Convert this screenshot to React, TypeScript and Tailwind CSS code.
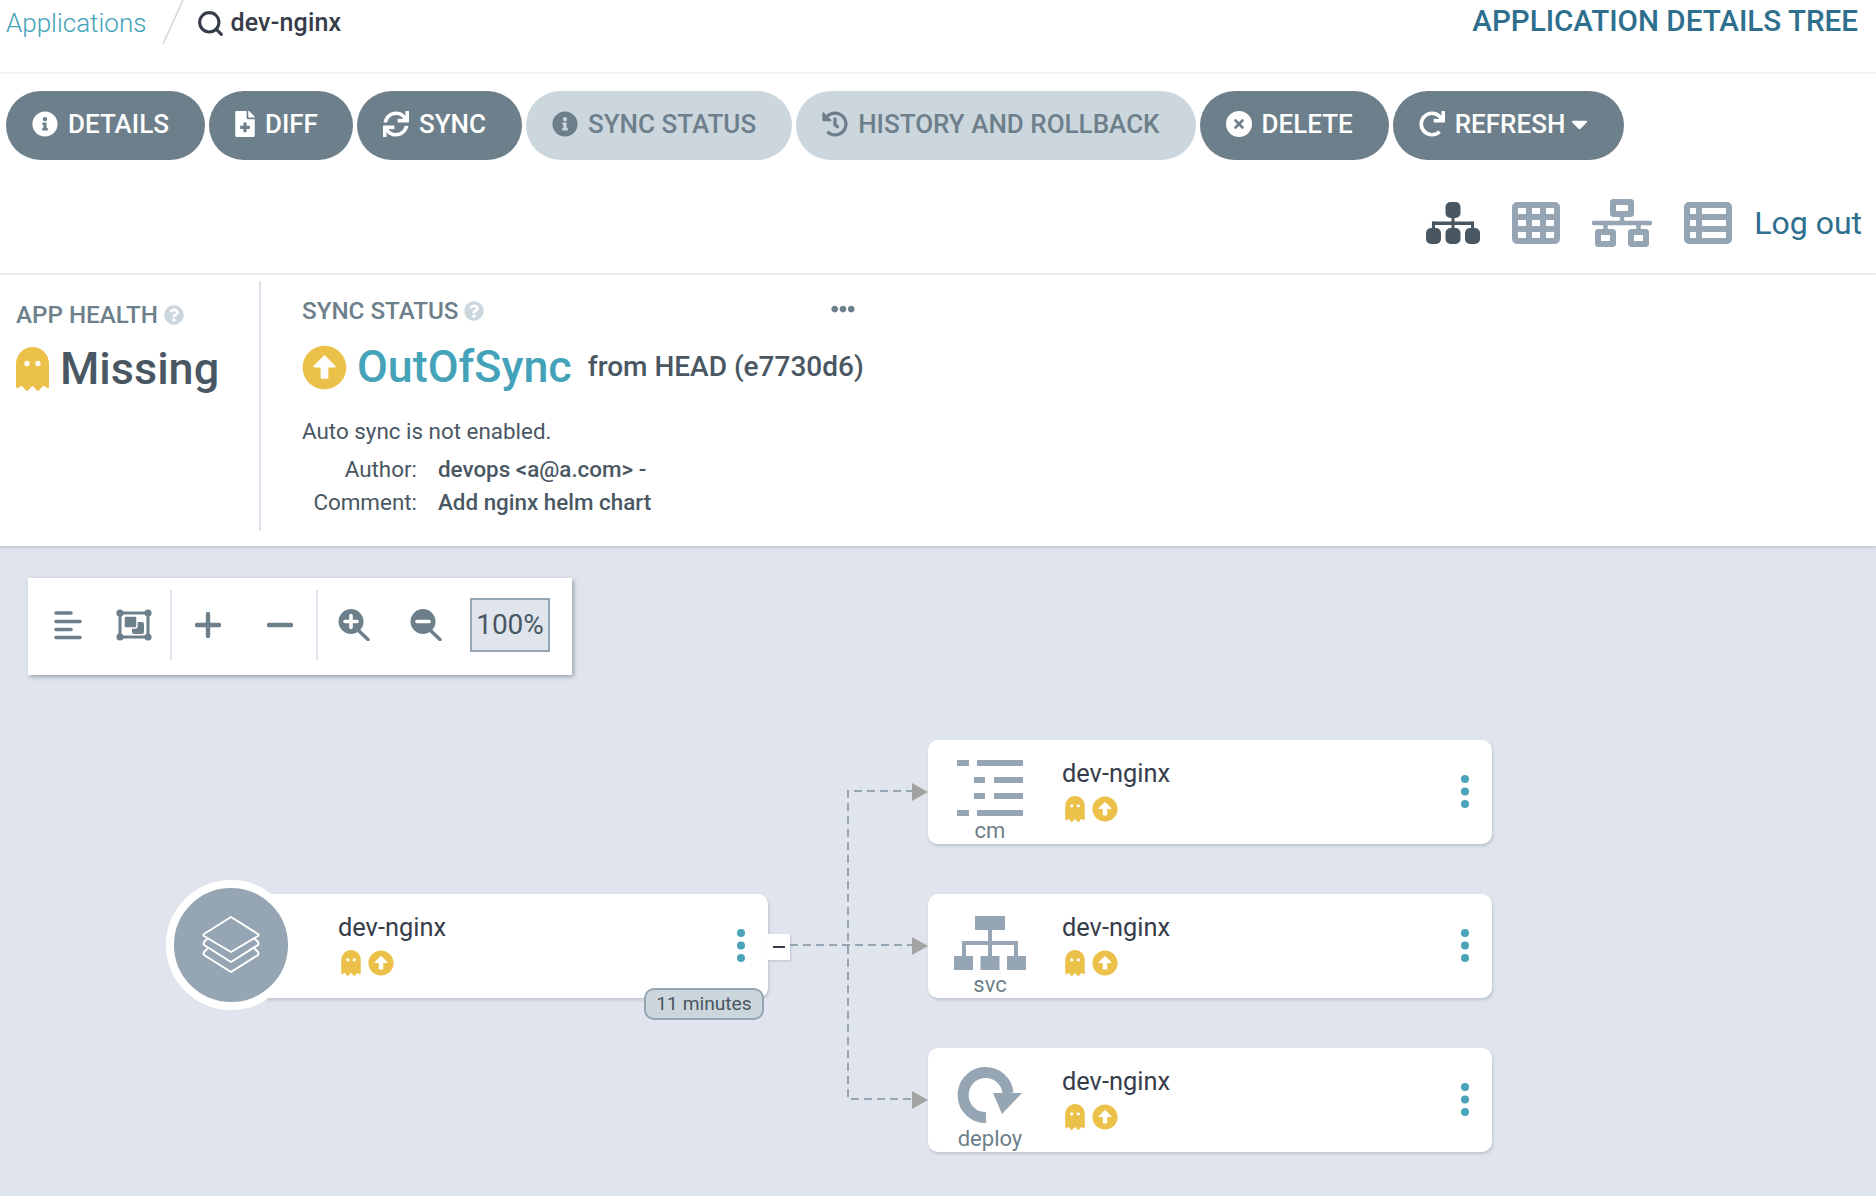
import React from 'react';
import { Search } from 'lucide-react';
import {
    FaInfoCircle, FaFileMedical, FaSync, FaHistory, FaRedo, FaCaretDown,
    FaNetworkWired, FaGhost, FaArrowAltCircleUp, FaQuestionCircle, FaEllipsisH,
} from 'react-icons/fa';

const ActionButton: React.FC<{ label: string; icon: React.ReactNode; disabled?: boolean; caret?: boolean; tight?: boolean }> = ({ label, icon, disabled, caret, tight }) => (
    <button
        className={`flex h-[69px] items-center rounded-[35px] pb-[3px] pl-[26px] text-[26px] font-medium ${tight ? 'pr-[35px]' : 'pr-[36px]'} ${disabled ? 'bg-[#ccd6dd] text-[#6d7f8b]' : 'bg-[#6d7f8b] text-white'}`}
    >
        <span className="mr-[10px] text-[26px]">{icon}</span>
        {label}
        {caret && <FaCaretDown className="ml-[6px] h-[26px] w-[17px]" />}
    </button>
);

const DeleteGlyph = () => (
    <svg width="26" height="26" viewBox="0 0 26 26">
        <circle cx="13" cy="13" r="13" fill="white" />
        <path d="M9.5 9.5 L16.5 16.5 M16.5 9.5 L9.5 16.5" stroke="#6d7f8b" strokeWidth="2.6" strokeLinecap="round" />
    </svg>
);

const TreeGlyph = () => (
    <svg width="54" height="42" viewBox="0 0 54 42" className="fill-[#495763]">
        <rect x="19.5" y="0" width="15" height="16" rx="5" />
        <rect x="25.5" y="14" width="3" height="14" />
        <rect x="6" y="19.5" width="42" height="3.5" rx="1.75" />
        <rect x="6" y="19.5" width="3" height="8" />
        <rect x="45" y="19.5" width="3" height="8" />
        <rect x="0" y="26" width="15" height="16" rx="5" />
        <rect x="19.5" y="26" width="15" height="16" rx="5" />
        <rect x="39" y="26" width="15" height="16" rx="5" />
    </svg>
);

const GridGlyph = () => (
    <svg width="48" height="42" viewBox="0 0 48 42" className="fill-[#95a5b3]">
        <path
            fillRule="evenodd"
            d="M5 0H43A5 5 0 0 1 48 5V37A5 5 0 0 1 43 42H5A5 5 0 0 1 0 37V5A5 5 0 0 1 5 0Z
               M6 6V12H14V6Z M20 6V12H28V6Z M34 6V12H42V6Z
               M6 18V24H14V18Z M20 18V24H28V18Z M34 18V24H42V18Z
               M6 30V36H14V30Z M20 30V36H28V30Z M34 30V36H42V30Z"
        />
    </svg>
);

const ListGlyph = () => (
    <svg width="48" height="42" viewBox="0 0 48 42" className="fill-[#95a5b3]">
        <path
            fillRule="evenodd"
            d="M5 0H43A5 5 0 0 1 48 5V37A5 5 0 0 1 43 42H5A5 5 0 0 1 0 37V5A5 5 0 0 1 5 0Z
               M6 6V12H12V6Z M18 6V12H42V6Z
               M6 18V24H12V18Z M18 18V24H42V18Z
               M6 30V36H12V30Z M18 30V36H42V30Z"
        />
    </svg>
);

const StatusIcons = () => (
    <div className="mt-[6px] flex items-center gap-[7px] pl-[3px] text-[#ecc14a]">
        <FaGhost className="h-[26px] w-[20px]" />
        <FaArrowAltCircleUp size={26} />
    </div>
);

const Kebab = () => (
    <svg width="8" height="33" viewBox="0 0 8 33" className="-mt-[2px] fill-[#4aa3b8]">
        <circle cx="4" cy="4" r="4" />
        <circle cx="4" cy="16.5" r="4" />
        <circle cx="4" cy="29" r="4" />
    </svg>
);

const ConfigMapIcon = () => (
    <svg width="66" height="56" viewBox="0 0 66 56" className="mt-[1px] fill-[#95a5b3]">
        <rect x="0" y="0" width="12" height="6" />
        <rect x="20" y="0" width="46" height="6" />
        <rect x="17" y="17" width="11" height="6" />
        <rect x="37" y="17" width="29" height="6" />
        <rect x="17" y="33" width="11" height="6" />
        <rect x="37" y="33" width="29" height="6" />
        <rect x="0" y="50" width="12" height="6" />
        <rect x="20" y="50" width="46" height="6" />
    </svg>
);

const ServiceIcon = () => (
    <svg width="72" height="54" viewBox="0 0 72 54" className="mt-[2px] fill-[#95a5b3]">
        <rect x="21" y="0" width="30" height="14" />
        <rect x="34" y="14" width="4" height="27" />
        <rect x="8" y="25" width="56" height="4" />
        <rect x="8" y="25" width="4" height="16" />
        <rect x="60" y="25" width="4" height="16" />
        <rect x="0" y="40" width="19" height="14" />
        <rect x="26.5" y="40" width="19" height="14" />
        <rect x="53" y="40" width="19" height="14" />
    </svg>
);

const DeployIcon = () => (
    <svg width="66" height="58" viewBox="0 0 66 58" className="-mt-[1px]">
        <path d="M29 51.5 A22.5 22.5 0 1 1 51 27" fill="none" stroke="#95a5b3" strokeWidth="11" />
        <polygon points="36,27 65,27 45,48" fill="#95a5b3" />
    </svg>
);

const LayersIcon = () => (
    <svg width="58" height="58" viewBox="0 0 58 58" fill="none" stroke="white" strokeWidth="2" strokeLinejoin="round" strokeLinecap="round">
        <path d="M29 1 L56 18 Q57 19 56 20 L29 36 L2 20 Q1 19 2 18 Z" />
        <path d="M5 23 L2 26 Q1 28 2 29 L29 46 L56 29 Q57 28 56 26 L53 23" />
        <path d="M5 33 L2 36 Q1 38 2 39 L29 56 L56 39 Q57 38 56 36 L53 33" />
    </svg>
);

const GraphNode: React.FC<{ className: string; icon?: React.ReactNode; kind?: string }> = ({ className, icon, kind }) => (
    <div className={`absolute flex h-[104px] w-[564px] items-center rounded-[10px] bg-white shadow-[1px_2px_3px_rgba(109,127,139,0.3)] ${className}`}>
        <div className="flex h-full w-[124px] flex-col items-center">
            <div className="mt-[9px] flex h-[82px] items-center justify-center">{icon}</div>
            {kind && <div className="-mt-[8px] text-[22px] leading-[26px] text-[#6d7f8b]">{kind}</div>}
        </div>
        <div className="ml-[10px] flex-1 self-start pt-[16px]">
            <div className="text-[25.4px] leading-[34px] text-[#363c4a]">dev-nginx</div>
            <StatusIcons />
        </div>
        <div className="mr-[23px] flex items-center">
            <Kebab />
        </div>
    </div>
);

const ToolIcon: React.FC<{ width: string; children: React.ReactNode }> = ({ width, children }) => (
    <div className={`flex items-center justify-center ${width}`}>{children}</div>
);

const AlignGlyph = () => (
    <svg width="28" height="30" viewBox="0 0 28 30" stroke="#6d7f8b" strokeWidth="3.6" strokeLinecap="round">
        <path d="M2 3 H17 M2 11.5 H26 M2 19.5 H17 M2 27.5 H26" />
    </svg>
);

const FitGlyph = () => (
    <svg width="36" height="32" viewBox="0 0 36 32">
        <rect x="4" y="4" width="28" height="24" fill="none" stroke="#6d7f8b" strokeWidth="3" />
        <circle cx="4" cy="4" r="3.6" fill="#6d7f8b" />
        <circle cx="32" cy="4" r="3.6" fill="#6d7f8b" />
        <circle cx="4" cy="28" r="3.6" fill="#6d7f8b" />
        <circle cx="32" cy="28" r="3.6" fill="#6d7f8b" />
        <rect x="16" y="13" width="12" height="12" rx="2" fill="#6d7f8b" />
        <rect x="8" y="7" width="13" height="12" rx="2" fill="#6d7f8b" stroke="white" strokeWidth="1.5" />
    </svg>
);

const ZoomGlyph: React.FC<{ plus?: boolean }> = ({ plus }) => (
    <svg width="32" height="32" viewBox="0 0 32 32">
        <path d="M20 21 L30 30.5" stroke="#6d7f8b" strokeWidth="3.4" strokeLinecap="round" />
        <circle cx="13" cy="12.5" r="12.5" fill="#6d7f8b" />
        <path d={plus ? 'M7 12.5 H19 M13 6.5 V18.5' : 'M7 12.5 H19'} stroke="white" strokeWidth="3.6" strokeLinecap="round" />
    </svg>
);

const StepGlyph: React.FC<{ plus?: boolean }> = ({ plus }) => (
    <svg width="26" height="26" viewBox="0 0 26 26" stroke="#6d7f8b" strokeWidth="4.4" strokeLinecap="round">
        <path d={plus ? 'M2 13 H24 M13 2 V24' : 'M2 13 H24'} />
    </svg>
);

export default function App() {
    return (
        <div className="flex min-h-screen flex-col bg-white font-[Roboto,sans-serif] text-[#495763]">
            {/* Top bar */}
            <div className="flex h-[74px] items-start justify-between border-b-2 border-[#eff3f6] pl-[6px] pr-[18px]">
                <div className="flex items-center pt-[1px]">
                    <span className="text-[26px] leading-[36px] font-light text-[#44a2b9]">Applications</span>
                    <svg width="22" height="46" viewBox="0 0 22 46" className="ml-[16px] -mt-[2px]">
                        <line x1="21" y1="1" x2="1" y2="45" stroke="#ccd6dd" strokeWidth="1.5" />
                    </svg>
                    <Search size={29} strokeWidth={2.5} className="ml-[12px] text-[#363c4a]" />
                    <span className="ml-[5px] text-[25px] leading-[36px] font-medium tracking-[0.2px] text-[#363c4a]">dev-nginx</span>
                </div>
                <div className="pt-[3px] text-[29.6px] leading-[36px] font-medium text-[#2e6f8e]">APPLICATION DETAILS TREE</div>
            </div>

            {/* Actions */}
            <div className="flex gap-[4px] pl-[6px] pt-[17px]">
                <ActionButton label="DETAILS" icon={<FaInfoCircle />} />
                <ActionButton label="DIFF" icon={<FaFileMedical className="w-[20px]" />} tight />
                <ActionButton label="SYNC" icon={<FaSync />} />
                <ActionButton label="SYNC STATUS" icon={<FaInfoCircle />} disabled />
                <ActionButton label="HISTORY AND ROLLBACK" icon={<FaHistory />} disabled />
                <ActionButton label="DELETE" icon={<DeleteGlyph />} />
                <ActionButton label="REFRESH" icon={<FaRedo />} caret />
            </div>

            {/* View switch */}
            <div className="flex h-[115px] items-center justify-end border-b-2 border-[#eff3f6] pr-[14px] pt-[13px]">
                <TreeGlyph />
                <div className="ml-[32px]"><GridGlyph /></div>
                <FaNetworkWired className="ml-[32px] text-[60px] text-[#95a5b3]" />
                <div className="ml-[32px]"><ListGlyph /></div>
                <span className="ml-[22px] text-[32px] leading-[40px] text-[#2e6f8e]">Log out</span>
            </div>

            {/* Status panel */}
            <div className="relative z-10 flex h-[271px] bg-white pt-[6px] shadow-[0_1px_3px_rgba(109,127,139,0.4)]">
                <div className="h-[250px] w-[261px] border-r-2 border-[#dee3eb] pl-[16px]">
                    <div className="mt-[18px] flex items-center text-[24.2px] leading-[32px] font-medium text-[#6d7f8b]">
                        APP HEALTH
                        <FaQuestionCircle className="ml-[6px] text-[20px] text-[#ccd6dd]" />
                    </div>
                    <div className="mt-[12px] flex items-center">
                        <FaGhost className="h-[44px] w-[33px] text-[#ecc14a]" />
                        <span className="ml-[11px] text-[45px] leading-[52px] font-medium">Missing</span>
                    </div>
                </div>
                <div className="relative pl-[41px]">
                    <div className="mt-[14px] flex items-center text-[24.2px] leading-[32px] font-medium text-[#6d7f8b]">
                        SYNC STATUS
                        <FaQuestionCircle className="ml-[6px] text-[20px] text-[#ccd6dd]" />
                        <FaEllipsisH className="ml-[347px] -mt-[4px] text-[24px]" />
                    </div>
                    <div className="mt-[14px] flex items-center">
                        <FaArrowAltCircleUp className="text-[45px] text-[#ecc14a]" />
                        <span className="ml-[10px] text-[44.8px] leading-[52px] font-medium text-[#44a2b9]">OutOfSync</span>
                        <span className="ml-[16px] text-[28px] font-medium">from HEAD (e7730d6)</span>
                    </div>
                    <div className="mt-[22px] text-[22.4px] leading-[32px]">Auto sync is not enabled.</div>
                    <div className="mt-[6px] grid grid-cols-[115px_auto] gap-x-[21px] text-[22.4px] leading-[33px]">
                        <span className="text-right">Author:</span>
                        <span className="font-medium">devops &lt;a@a.com&gt; -</span>
                        <span className="text-right">Comment:</span>
                        <span className="font-medium">Add nginx helm chart</span>
                    </div>
                </div>
            </div>

            {/* Graph canvas */}
            <div className="relative flex-1 bg-[#e0e4ec]">
                <div className="ml-[28px] mt-[32px] flex h-[97px] w-[544px] items-center bg-white pb-[3px] pl-[7px] shadow-[2px_2px_4px_rgba(109,127,139,0.6)]">
                    <ToolIcon width="w-[66px]"><AlignGlyph /></ToolIcon>
                    <ToolIcon width="w-[66px]"><FitGlyph /></ToolIcon>
                    <div className="ml-[3px] h-[70px] w-[2px] bg-[#dee3eb]" />
                    <ToolIcon width="w-[72px]"><StepGlyph plus /></ToolIcon>
                    <ToolIcon width="w-[72px]"><StepGlyph /></ToolIcon>
                    <div className="h-[70px] w-[2px] bg-[#dee3eb]" />
                    <ToolIcon width="w-[72px]"><ZoomGlyph plus /></ToolIcon>
                    <ToolIcon width="w-[72px]"><ZoomGlyph /></ToolIcon>
                    <div className="ml-[8px] flex h-[54px] w-[80px] items-center justify-center border-2 border-[#95a5b3] bg-[#e0e4ec] text-[28px]">100%</div>
                </div>

                {/* Edges */}
                <svg className="absolute left-0 top-[1px]" width="1000" height="620" fill="none" stroke="#95a5b3" strokeWidth="2" strokeDasharray="8 5">
                    <path d="M790 398 H914" />
                    <path d="M914 244 H848 V552 H914" />
                    <polygon points="912,236 928,245 912,254" fill="#a3a3a3" stroke="none" />
                    <polygon points="912,390 928,399 912,408" fill="#a3a3a3" stroke="none" />
                    <polygon points="912,544 928,553 912,562" fill="#a3a3a3" stroke="none" />
                </svg>

                {/* Nodes */}
                <GraphNode className="left-[204px] top-[348px]" />
                <div className="absolute left-[166px] top-[334px] flex h-[130px] w-[130px] items-center justify-center rounded-full border-[8px] border-white bg-[#95a5b3]">
                    <LayersIcon />
                </div>
                <div className="absolute left-[768px] top-[388px] flex h-[26px] w-[22px] items-center justify-center bg-white shadow-[1px_1px_2px_rgba(109,127,139,0.3)]">
                    <div className="h-[2px] w-[12px] bg-[#363c4a]" />
                </div>
                <div className="absolute left-[644px] top-[442px] flex h-[32px] w-[120px] items-center justify-center rounded-[10px] border-2 border-[#95a5b3] bg-[#ccd6dd] text-[19.2px]">11 minutes</div>

                <GraphNode className="left-[928px] top-[194px]" icon={<ConfigMapIcon />} kind="cm" />
                <GraphNode className="left-[928px] top-[348px]" icon={<ServiceIcon />} kind="svc" />
                <GraphNode className="left-[928px] top-[502px]" icon={<DeployIcon />} kind="deploy" />
            </div>
        </div>
    );
}
